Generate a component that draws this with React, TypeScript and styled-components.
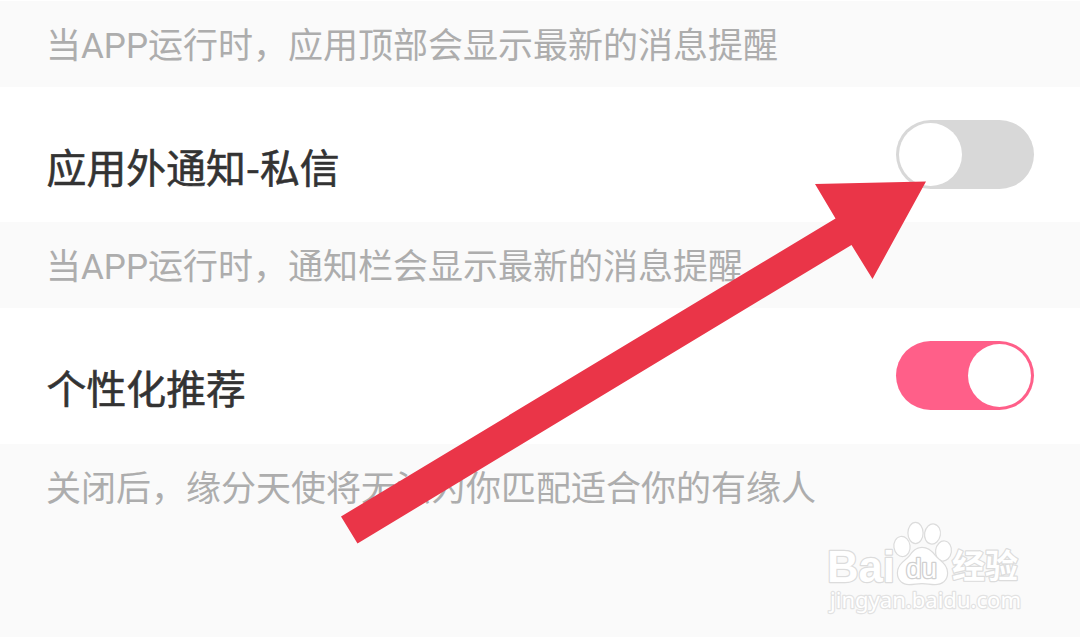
import React, { useState } from 'react';
import styled, { createGlobalStyle } from 'styled-components';

const GlobalStyle = createGlobalStyle`
  body {
    margin: 0;
    background: #fff;
    font-family: "Noto Sans CJK SC", sans-serif;
  }
`;

const Page = styled.main`
  position: relative;
  box-sizing: border-box;
  display: flex;
  flex-direction: column;
  width: 1080px;
  height: 638px;
  padding: 1px 0;
  overflow: hidden;
`;

const Hint = styled.p<{ $fill?: boolean }>`
  box-sizing: border-box;
  flex: ${({ $fill }) => ($fill ? '1' : '0 0 86px')};
  margin: 0;
  padding: 6px 46px 0;
  background: #fafafa;
  color: #adadad;
  font-family: Roboto, "Noto Sans CJK SC", sans-serif;
  font-size: 35px;
  line-height: 80px;
  white-space: nowrap;
`;

const Row = styled.div`
  box-sizing: border-box;
  display: flex;
  flex: 0 0 135.3px;
  align-items: center;
  justify-content: space-between;
  padding: 0 46px;
`;

const Title = styled.span`
  padding: 23px 0 0 0.5px;
  color: #333;
  font-size: 39.8px;
  line-height: 56px;
  letter-spacing: 0.1px;
  -webkit-text-stroke: 0.6px #333;
`;

const Switch = styled.button<{ $on: boolean }>`
  box-sizing: border-box;
  display: flex;
  justify-content: ${({ $on }) => ($on ? 'flex-end' : 'flex-start')};
  width: 138px;
  height: 69px;
  margin: 0;
  padding: 3px;
  border: 0;
  border-radius: 35px;
  background: ${({ $on }) => ($on ? '#ff5f89' : '#d8d8d8')};
`;

const Knob = styled.span`
  width: 63px;
  height: 63px;
  border-radius: 50%;
  background: #fff;
`;

const Arrow = styled.svg`
  position: absolute;
  top: 0;
  left: 0;
  pointer-events: none;
`;

const Watermark = styled.svg`
  position: absolute;
  top: 510px;
  left: 810px;
  pointer-events: none;
`;

interface ISetting {
  title: string;
  hint: string;
  defaultOn?: boolean;
  last?: boolean;
}

const settings: ISetting[] = [
  {
    title: '应用外通知-私信',
    hint: '当APP运行时，通知栏会显示最新的消息提醒',
  },
  {
    title: '个性化推荐',
    hint: '关闭后，缘分天使将无法为你匹配适合你的有缘人',
    defaultOn: true,
    last: true,
  },
];

const Setting = ({
  title, hint, defaultOn = false, last,
}: ISetting) => {
  const [on, setOn] = useState(defaultOn);

  return (
    <>
      <Row>
        <Title>{title}</Title>
        <Switch $on={on} role="switch" aria-checked={on} onClick={() => setOn(!on)}>
          <Knob />
        </Switch>
      </Row>
      <Hint $fill={last}>{hint}</Hint>
    </>
  );
};

const BaiduMark = () => (
  <Watermark width="240" height="128" viewBox="0 0 240 128">
    <g fill="#fff" stroke="#dcdcdc" strokeWidth="2.4" strokeLinejoin="round" paintOrder="stroke">
      <text x="17" y="72" fontFamily="Liberation Sans" fontWeight="700" fontSize="44" textLength="68" lengthAdjust="spacingAndGlyphs">Bai</text>
      <ellipse cx="92" cy="36.5" rx="7.5" ry="9.5" transform="rotate(-8 92 36.5)" />
      <ellipse cx="105.5" cy="23" rx="7" ry="10" />
      <ellipse cx="122.5" cy="24" rx="7.3" ry="9.5" transform="rotate(10 122.5 24)" />
      <ellipse cx="133.5" cy="41" rx="7.3" ry="9.5" transform="rotate(8 133.5 41)" />
      <path d="M112 38c-6 0-9 4-12 8-4 5-12 8-12 17 0 7 5 11 11 11 5 0 8-1 13-1s8 1 13 1c7 0 12-4 12-11 0-9-8-12-12-17-3-4-7-8-13-8z" />
      <text x="96" y="68" fontFamily="Liberation Sans" fontSize="27" textLength="31" lengthAdjust="spacingAndGlyphs" stroke="#d0d0d0" strokeWidth="2.6">du</text>
      <text x="142" y="68" fontFamily="Noto Sans CJK SC" fontWeight="700" fontSize="33" textLength="66" lengthAdjust="spacingAndGlyphs">经验</text>
      <text x="20" y="98" fontFamily="Noto Sans" fontSize="22" textLength="191" lengthAdjust="spacingAndGlyphs" stroke="#e2e2e2">jingyan.baidu.com</text>
    </g>
  </Watermark>
);

const App = () => (
  <>
    <GlobalStyle />
    <Page>
      <Hint>当APP运行时，应用顶部会显示最新的消息提醒</Hint>
      {settings.map((setting) => (
        <Setting key={setting.title} {...setting} />
      ))}
      <BaiduMark />
      <Arrow width="1080" height="638" viewBox="0 0 1080 638">
        <path d="M926 181.5 872.5 279 851.5 245 357.5 543.5 341 516.5 835.5 218.5 815 184z" fill="#ea3548" />
      </Arrow>
    </Page>
  </>
);

export default App;
